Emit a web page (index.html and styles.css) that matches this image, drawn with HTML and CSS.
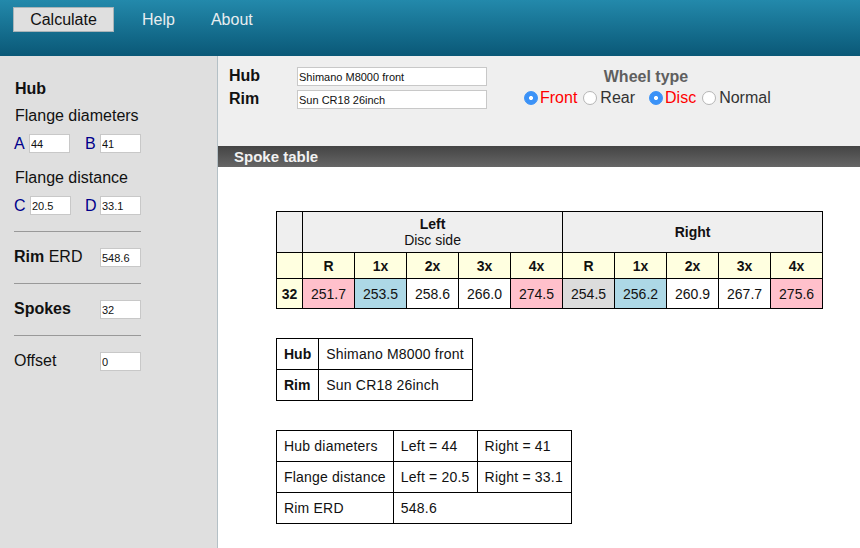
FILE: index.html
```html
<!DOCTYPE html>
<html lang="en">
<head>
<meta charset="utf-8">
<title>Spoke calculator</title>
<link rel="stylesheet" href="styles.css">
</head>
<body>
<header class="topbar">
  <button class="calc" type="button">Calculate</button>
  <a class="nav">Help</a>
  <a class="nav nav-about">About</a>
</header>
<div class="main">
  <aside class="side">
    <div class="side-title">Hub</div>
    <div class="side-label">Flange diameters</div>
    <div class="pair">
      <label class="letter l-a">A</label><input class="num" value="44">
      <label class="letter l-b">B</label><input class="num" value="41">
    </div>
    <div class="side-label second">Flange distance</div>
    <div class="pair">
      <label class="letter l-c">C</label><input class="num" value="20.5">
      <label class="letter l-d">D</label><input class="num" value="33.1">
    </div>
    <hr class="rule">
    <div class="row"><span><b>Rim</b> ERD</span><input class="num" value="548.6"></div>
    <hr class="rule">
    <div class="row"><b>Spokes</b><input class="num" value="32"></div>
    <hr class="rule">
    <div class="row"><span>Offset</span><input class="num" value="0"></div>
  </aside>
  <main class="content">
    <section class="panel">
      <div class="names">
        <div class="name-row"><b>Hub</b><input class="name" value="Shimano M8000 front"></div>
        <div class="name-row"><b>Rim</b><input class="name" value="Sun CR18 26inch"></div>
      </div>
      <div class="wheel">
        <div class="wheel-title">Wheel type</div>
        <div class="radios">
          <input class="radio" type="radio" name="pos" checked><span class="on">Front</span>
          <input class="radio gap-s" type="radio" name="pos"><span>Rear</span>
          <input class="radio gap-l" type="radio" name="kind" checked><span class="on">Disc</span>
          <input class="radio gap-s" type="radio" name="kind"><span>Normal</span>
        </div>
      </div>
    </section>
    <h2 class="bar">Spoke table</h2>
    <section class="tables">
      <table class="spokes">
        <colgroup>
          <col class="c-first">
          <col class="c-val"><col class="c-val"><col class="c-val"><col class="c-val"><col class="c-val">
          <col class="c-val"><col class="c-val"><col class="c-val"><col class="c-val"><col class="c-val">
        </colgroup>
        <tr class="head">
          <td class="blank"></td>
          <td colspan="5"><b>Left</b><br>Disc side</td>
          <td colspan="5"><b>Right</b></td>
        </tr>
        <tr class="cross">
          <th></th><th>R</th><th>1x</th><th>2x</th><th>3x</th><th>4x</th><th>R</th><th>1x</th><th>2x</th><th>3x</th><th>4x</th>
        </tr>
        <tr class="vals">
          <th>32</th>
          <td class="pink">251.7</td><td class="blue">253.5</td><td>258.6</td><td>266.0</td><td class="pink">274.5</td>
          <td class="grey">254.5</td><td class="blue">256.2</td><td>260.9</td><td>267.7</td><td class="pink">275.6</td>
        </tr>
      </table>
      <table class="info">
        <tr><th>Hub</th><td>Shimano M8000 front</td></tr>
        <tr><th>Rim</th><td>Sun CR18 26inch</td></tr>
      </table>
      <table class="info">
        <tr><td>Hub diameters</td><td>Left = 44</td><td>Right = 41</td></tr>
        <tr><td>Flange distance</td><td>Left = 20.5</td><td>Right = 33.1</td></tr>
        <tr><td>Rim ERD</td><td colspan="2">548.6</td></tr>
      </table>
    </section>
  </main>
</div>
</body>
</html>
```
FILE: styles.css
```css
* { box-sizing: border-box; }
html, body { margin: 0; height: 100%; overflow: hidden; }
body {
  width: 860px;
  height: 548px;
  font-family: "Liberation Sans", Arial, sans-serif;
  font-size: 16px;
  color: #111;
  background: #fff;
  display: flex;
  flex-direction: column;
}

.topbar {
  height: 56px;
  flex: none;
  padding: 7px 0 0 13px;
  display: flex;
  align-items: flex-start;
  background: linear-gradient(#2389ab, #0a5877);
}
.calc {
  width: 101px;
  height: 25px;
  padding: 0;
  border: 1px solid #a9b4b8;
  background: #dfdfdf;
  color: #111;
  font: 16px "Liberation Sans", Arial, sans-serif;
}
.nav {
  color: #e8eef0;
  font-size: 16px;
  line-height: 25px;
  margin-left: 28px;
}
.nav-about { margin-left: 36px; }

.main { flex: 1; display: flex; min-height: 0; }

.side {
  width: 218px;
  flex: none;
  background: #dfdfdf;
  border-right: 1px solid #b4c0c6;
  padding: 23px 0 0 14px;
}
.side-title {
  font-weight: bold;
  margin-left: 1px;
  line-height: 19px;
}
.side-label {
  margin: 8px 0 0 1px;
  line-height: 19px;
}
.side-label.second { margin-top: 15px; }
.pair {
  display: flex;
  align-items: center;
  height: 19px;
  margin-top: 9px;
}
.letter { color: #00008b; line-height: 19px; }
.l-a { width: 15px; }
.l-b { width: 15px; margin-left: 15px; }
.l-c { width: 16px; }
.l-d { width: 15px; margin-left: 14px; }
.num {
  width: 41px;
  height: 19px;
  padding: 1px 1px 0;
  border: 1px solid #c8c8c8;
  background: #fff;
  color: #111;
  font: 11px "Liberation Sans", Arial, sans-serif;
}
.rule {
  width: 127px;
  height: 1px;
  margin: 16px 0;
  border: 0;
  background: #999;
}
.row {
  width: 127px;
  height: 19px;
  line-height: 17px;
  display: flex;
  justify-content: space-between;
  align-items: flex-start;
}

.content { flex: 1; min-width: 0; display: flex; flex-direction: column; }

.panel {
  height: 90px;
  flex: none;
  background: #efefef;
  padding: 9px 0 0 11px;
  display: flex;
}
.names { width: 259px; flex: none; }
.name-row {
  display: flex;
  align-items: flex-start;
  height: 23px;
  padding-top: 2px;
  font-size: 16px;
}
.name-row b { width: 68px; line-height: 17px; }
.name {
  width: 190px;
  height: 19px;
  padding: 1px 1px 0;
  border: 1px solid #c8c8c8;
  background: #fff;
  color: #111;
  font: 11px "Liberation Sans", Arial, sans-serif;
}
.wheel { margin-left: 36px; width: 244px; }
.wheel-title {
  font-weight: bold;
  color: #5f5f5f;
  text-align: center;
  line-height: 20px;
  margin-top: 2px;
}
.radios {
  display: flex;
  align-items: center;
  height: 22px;
  color: #333;
}
.on { color: #f00; }
.radio {
  appearance: none;
  -webkit-appearance: none;
  width: 14px;
  height: 14px;
  margin: 0 3px 0 0;
  flex: none;
  border-radius: 50%;
  border: 1px solid #b5b5b5;
  background: #fff;
}
.radio:checked {
  margin-right: 2px;
  border-color: #3b92f7;
  background: radial-gradient(circle, #fff 0 1.6px, #3b92f7 2.4px);
}
.gap-s { margin-left: 6px; }
.gap-l { margin-left: 14px; }

.bar {
  height: 21px;
  flex: none;
  margin: 0;
  padding: 1px 0 0 16px;
  background: linear-gradient(#444, #666);
  color: #f2f2f2;
  font-size: 15px;
  font-weight: bold;
  line-height: 19px;
}

.tables {
  flex: 1;
  padding: 44px 0 0 58px;
  display: flex;
  flex-direction: column;
  align-items: flex-start;
  gap: 29px;
}
table {
  border-collapse: collapse;
  font-size: 14px;
  color: #111;
}
td, th { border: 1px solid #000; padding: 0; }

.spokes { table-layout: fixed; width: 547px; }
.c-first { width: 26px; }
.c-val { width: 52px; }
.spokes td, .spokes th { text-align: center; }
.head td { background: #efefef; height: 41px; line-height: 16px; }
.cross th { background: #ffffe0; height: 26px; }
.vals td, .vals th { height: 30px; }
.vals th { background: #ffffe0; }
.pink { background: #ffc0cb; }
.blue { background: #add8e6; }
.grey { background: #dcdcdc; }

.info td, .info th {
  height: 31px;
  padding: 0 7px;
  text-align: left;
  white-space: nowrap;
}
.info td { letter-spacing: 0.2px; }
.info td:last-child { padding-right: 8px; }
```
